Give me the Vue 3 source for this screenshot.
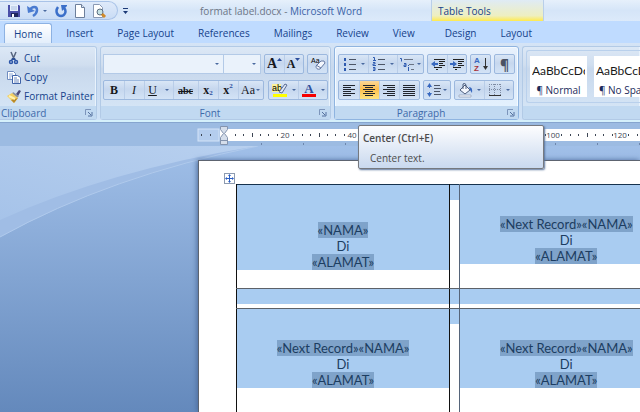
<template>
  <div class="word">
    <header class="title-bar">
      <div class="quick-access">
        <button class="qa-btn" aria-label="Save">
          <svg width="14" height="14" viewBox="0 0 14 14">
            <path d="M1 1h11l1 1v11H1z" fill="#4a4fa8" />
            <path d="M3 1h8v6H3z" fill="#e8f1fc" />
            <path d="M4 3h6M4 5h6" stroke="#a9bfe0" />
            <path d="M4 9h7v4H4z" fill="#20285f" />
            <path d="M5 10h2v3H5z" fill="#fff" />
          </svg>
        </button>
        <button class="qa-btn" aria-label="Undo">
          <svg width="14" height="14" viewBox="0 0 14 14">
            <path d="M3 6C5 2 10 2 10 6c0 3-1 4-4 6" fill="none" stroke="#4a7bd0" stroke-width="2.500" />
            <path d="M0 2l1 7 7-2z" fill="#4a7bd0" />
          </svg>
        </button>
        <span class="caret"></span>
        <button class="qa-btn" aria-label="Repeat">
          <svg width="14" height="14" viewBox="0 0 14 14">
            <path d="M3 3c-3 4-1 9 3 9s6-5 3-8" fill="none" stroke="#3b6fc9" stroke-width="2.500" />
            <path d="M6 1h6v1L7 7z" fill="#3b6fc9" />
          </svg>
        </button>
        <button class="qa-btn" aria-label="New">
          <svg width="14" height="14" viewBox="0 0 14 14">
            <path d="M.500.500h6l3 3v10h-9z" fill="#fff" stroke="#6d7f9b" />
            <path d="M6.500.500v3h3" fill="#dbe6f4" stroke="#6d7f9b" />
          </svg>
        </button>
        <button class="qa-btn" aria-label="Print Preview">
          <svg width="14" height="14" viewBox="0 0 14 14">
            <path d="M.500.500h6l3 3v10h-9z" fill="#fff" stroke="#8a99b3" />
            <circle cx="7" cy="8" r="3" fill="#c6e2e4" stroke="#5b6c80" />
            <path d="M9 10l3 3" stroke="#d08a2a" stroke-width="3" />
          </svg>
        </button>
      </div>
      <button class="customize" aria-label="Customize Quick Access Toolbar">
        <svg width="5" height="6" viewBox="0 0 5 6">
          <path d="M0 0h5v1H0zM0 3h5L2.500 6z" fill="#1c3a77" />
        </svg>
      </button>
      <h1 class="window-title"><span>format label.docx - </span>Microsoft Word</h1>
      <div class="context-title">Table Tools</div>
    </header>

    <nav class="tabs">
      <button
        v-for="tab in tabs"
        :key="tab"
        class="tab"
        :class="{ active: tab === activeTab }"
        @click="activeTab = tab"
      >{{ tab }}</button>
      <div class="context-tabs">
        <button
          v-for="tab in contextTabs"
          :key="tab"
          class="tab"
          :class="{ active: tab === activeTab }"
          @click="activeTab = tab"
        >{{ tab }}</button>
      </div>
    </nav>

    <section class="ribbon">
      <div class="group clipboard">
        <div class="group-body clip-body">
          <button class="clip-btn">
            <svg width="14" height="14" viewBox="0 0 14 14">
              <path d="M4 1l3 7M9 1L6 8" stroke="#56657f" stroke-width="1.500" />
              <path d="M5 7h3l1 2H4z" fill="#2c4f94" />
              <circle cx="4" cy="11" r="1.500" fill="none" stroke="#2c55a8" stroke-width="1.500" />
              <circle cx="9" cy="11" r="1.500" fill="none" stroke="#2c55a8" stroke-width="1.500" />
            </svg>
            Cut
          </button>
          <button class="clip-btn">
            <svg width="14" height="14" viewBox="0 0 14 14">
              <path d="M.500 1.500h6l2 2v6h-8z" fill="#fff" stroke="#6f8cc0" />
              <path d="M2 4h4M2 6h4M2 8h2" stroke="#8fa9d6" />
              <path d="M5.500 5.500h5l3 2v6h-8z" fill="#fff" stroke="#3f63a8" />
              <path d="M7 8h3M7 10h5M7 12h5" stroke="#6f8cc0" />
            </svg>
            Copy
          </button>
          <button class="clip-btn">
            <svg width="14" height="14" viewBox="0 0 14 14">
              <path d="M9 5l3-4 2 1-3 5z" fill="#4a4a78" />
              <path d="M6 3l6 4-2 2-5-4z" fill="#8a8f9e" />
              <path d="M5 4l6 5-4 5L0 7z" fill="#f3cf62" />
              <path d="M11 9l-4 5-3-3z" fill="#b98a2a" />
              <path d="M2 7l6 3" stroke="#fff3b0" stroke-width="2" />
            </svg>
            Format Painter
          </button>
        </div>
        <div class="group-label">
          <span>Clipboard</span>
          <button class="launcher" aria-label="Clipboard options"><svg width="8" height="8" viewBox="0 0 8 8"><path d="M.500 6V.500H6" class="l1" /><path d="M3 3l3 3M7 3v4H3" class="l2" /></svg></button>
        </div>
      </div>

      <div class="group font">
        <div class="group-body">
          <div class="row">
            <div class="combos">
              <div class="combo combo-name">
                <input type="text" aria-label="Font" /><span class="caret"></span>
              </div>
              <div class="combo combo-size">
                <input type="text" aria-label="Font size" /><span class="caret"></span>
              </div>
            </div>
            <div class="cluster push">
              <button class="tool slim serif grow" aria-label="Grow Font">A<svg width="5" height="3" viewBox="0 0 5 3"><path d="M0 3h5L2.500 0z" fill="#2b4d9c" /></svg></button>
              <button class="tool slim serif shrink" aria-label="Shrink Font">A<svg width="5" height="3" viewBox="0 0 5 3"><path d="M0 0h5L2.500 3z" fill="#2b4d9c" /></svg></button>
            </div>
            <div class="cluster">
              <button class="tool slim" aria-label="Clear Formatting">
                <svg width="16" height="16" viewBox="0 0 16 16">
                  <text x="1" y="7" class="tiny">Aa</text>
                  <path d="M6 10l5-5q4-1 4 2l-5 6q-4 1-4-3z" fill="#f4f7fd" stroke="#6579a3" />
                  <path d="M6 9l5 3" stroke="#6579a3" />
                </svg>
              </button>
            </div>
          </div>
          <div class="row">
            <div class="cluster">
              <button class="tool serif"><b>B</b></button>
              <button class="tool serif"><i>I</i></button>
              <button class="tool serif wide under"><u>U</u><span class="caret"></span></button>
              <button class="tool serif mid"><s>abc</s></button>
              <button class="tool serif">x<sub>2</sub></button>
              <button class="tool serif">x<sup>2</sup></button>
              <button class="tool serif mid case">Aa<span class="caret"></span></button>
            </div>
            <div class="cluster push">
              <button class="tool wide" aria-label="Text Highlight Color">
                <svg width="16" height="16" viewBox="0 0 16 16">
                  <path d="M0 2h9v8H0z" fill="#fbf39a" />
                  <text x="0" y="9" class="ab">ab</text>
                  <path d="M7 10l6-8 2 1-5 8z" fill="#dfe8f6" stroke="#5a6c94" />
                  <path d="M1 12h14v3H1z" fill="#ffff00" />
                </svg>
                <span class="caret"></span>
              </button>
              <button class="tool wide" aria-label="Font Color">
                <svg width="16" height="16" viewBox="0 0 16 16">
                  <text x="8" y="11" text-anchor="middle" class="color-a">A</text>
                  <path d="M1 12h14v3H1z" fill="#f60000" />
                </svg>
                <span class="caret"></span>
              </button>
            </div>
          </div>
        </div>
        <div class="group-label">
          <span>Font</span>
          <button class="launcher" aria-label="Font options"><svg width="8" height="8" viewBox="0 0 8 8"><path d="M.500 6V.500H6" class="l1" /><path d="M3 3l3 3M7 3v4H3" class="l2" /></svg></button>
        </div>
      </div>

      <div class="group paragraph">
        <div class="group-body">
          <div class="row">
            <div class="cluster">
              <button class="tool wide" aria-label="Bullets">
                <svg width="14" height="14" viewBox="0 0 14 14">
                  <path d="M1 1h2v3H1zM1 6h2v3H1zM1 11h2v3H1z" fill="#2f5bb0" />
                  <path d="M6 2.500h7M6 7.500h7M6 12.500h7" stroke="#4c5566" />
                </svg>
                <span class="caret"></span>
              </button>
              <button class="tool wide" aria-label="Numbering">
                <svg width="14" height="14" viewBox="0 0 14 14">
                  <path d="M1 .500h1.500v3M1 3.500h3M1 5.500h2v1.500H1v1.500h3M1 10.500h2v3H1M1 12h2" fill="none" stroke="#2f5bb0" />
                  <path d="M6 2.500h7M6 7.500h7M6 12.500h7" stroke="#4c5566" />
                </svg>
                <span class="caret"></span>
              </button>
              <button class="tool mid" aria-label="Multilevel List">
                <svg width="15" height="14" viewBox="0 0 15 14">
                  <path d="M0 1.500h1.500v3M4 6.500h2v3H4V8h2M8.500 10v4M8.500 8v1" fill="none" stroke="#2f5bb0" />
                  <path d="M4 2.500h9M9 7.500h5M11 12.500h3" stroke="#6a7384" />
                </svg>
                <span class="caret"></span>
              </button>
            </div>
            <div class="cluster">
              <button v-for="dir in ['Decrease', 'Increase']" :key="dir" class="tool slim" :aria-label="dir + ' Indent'">
                <svg width="14" height="12" viewBox="0 0 14 12">
                  <path d="M3 1.500h11M8 3.500h6M8 5.500h4M8 7.500h6M3 9.500h8M5 11.500h2" stroke="#222" />
                  <path v-if="dir === 'Decrease'" d="M0 6l4-3v2h3v2H4v2z" fill="#3768bf" />
                  <path v-else d="M7 6L3 3v2H0v2h3v2z" fill="#3768bf" />
                </svg>
              </button>
            </div>
            <div class="cluster">
              <button class="tool slim" aria-label="Sort">
                <svg width="16" height="16" viewBox="0 0 16 16">
                  <text x="1" y="7" class="sort-a">A</text>
                  <text x="1" y="15" class="sort-z">Z</text>
                  <path d="M12.500 2v11" stroke="#333" />
                  <path d="M10 10h5l-2.500 4z" fill="#333" />
                </svg>
              </button>
            </div>
            <div class="cluster">
              <button class="tool slim pilcrow" aria-label="Show paragraph marks">¶</button>
            </div>
          </div>
          <div class="row">
            <div class="cluster">
              <button
                v-for="a in alignments"
                :key="a.name"
                class="tool"
                :class="{ on: a.name === align }"
                :aria-label="a.name"
                @click="align = a.name"
              >
                <svg width="14" height="11" viewBox="0 0 14 11"><path :d="a.path" stroke="#20242c" /></svg>
              </button>
            </div>
            <div class="cluster">
              <button class="tool mid" aria-label="Line spacing">
                <svg width="14" height="14" viewBox="0 0 14 14">
                  <path d="M2.500 2v3M2.500 9v3" stroke="#3768bf" />
                  <path d="M0 4h5L2.500 0zM0 10h5L2.500 14z" fill="#3768bf" />
                  <path d="M7 2.500h6M7 5.500h7M7 8.500h6M7 11.500h7" stroke="#4c5566" />
                </svg>
                <span class="caret"></span>
              </button>
            </div>
            <div class="cluster">
              <button class="tool wide" aria-label="Shading">
                <svg width="15" height="15" viewBox="0 0 15 15">
                  <path d="M2 7l5-5 5 5-5 4z" fill="#f4f7fd" stroke="#4f5f7d" />
                  <path d="M5 6V1q2-2 3 1v4" fill="none" stroke="#4f5f7d" />
                  <path d="M11 4q4 0 3 6l-2-3z" fill="#3768bf" />
                  <path d="M1 12h12v2H1z" fill="#fff" stroke="#a4b1c8" />
                </svg>
                <span class="caret"></span>
              </button>
              <button class="tool wide" aria-label="Borders">
                <svg width="14" height="14" viewBox="0 0 14 14">
                  <path d="M1.500 1v11M6.500 1v11M12.500 1v11M1 1.500h12M1 6.500h12" stroke="#7e8ba3" stroke-dasharray="1 1" />
                  <path d="M1 12.500h12" stroke="#333" />
                </svg>
                <span class="caret"></span>
              </button>
            </div>
          </div>
        </div>
        <div class="group-label">
          <span>Paragraph</span>
          <button class="launcher" aria-label="Paragraph options"><svg width="8" height="8" viewBox="0 0 8 8"><path d="M.500 6V.500H6" class="l1" /><path d="M3 3l3 3M7 3v4H3" class="l2" /></svg></button>
        </div>
      </div>

      <div class="group styles">
        <div class="gallery">
          <button v-for="s in styles" :key="s" class="style-card">
            <span class="sample">AaBbCcDc</span>
            <span class="style-name">¶ {{ s }}</span>
          </button>
        </div>
        <div class="group-label"></div>
      </div>
    </section>

    <main class="workspace">
      <svg class="ruler" height="23">
        <rect x="198" y="6" width="21" height="12" fill="#b4cdee" stroke="#d3e3f7" />
        <rect x="220" y="6" width="100%" height="12" fill="#fff" />
        <rect
          v-for="m in marks"
          :key="'m' + m.x"
          :x="m.x"
          :y="m.tall ? 10 : 11"
          width="1"
          :height="m.tall ? 4 : 2"
          fill="#3d4654"
        />
        <text v-for="n in numbers" :key="n" :x="218 + n * 67 / 20" y="15" class="ruler-num">{{ n }}</text>
        <rect v-for="n in 10" :key="'s' + n" :x="219 + n * 42" y="20" width="1" height="2" fill="#6d86ad" />
        <path d="M220.500 3.500h7v3l-3 4 3 4v7h-7v-7l3-4-3-4z" fill="#d5deeb" stroke="#8494ae" />
        <path d="M220 17.500h8" stroke="#8494ae" />
      </svg>

      <div class="desk">
        <svg class="swoosh" width="260" height="92" viewBox="0 0 260 92">
          <path d="M0 0h258Q120 26 0 91z" fill="#a0bde5" />
          <path d="M0 91Q110 30 258 0" fill="none" stroke="#b0caec" />
          <path d="M0 0h258Q110 24 0 74z" fill="url(#glow)" />
          <defs>
            <linearGradient id="glow" x1="0" y1="1" x2="1" y2="0">
              <stop offset="0" stop-color="#a6c3e9" />
              <stop offset="1" stop-color="#b8d0ef" />
            </linearGradient>
          </defs>
        </svg>

        <article class="page">
          <svg class="move-handle" width="11" height="11" viewBox="0 0 11 11">
            <rect x=".500" y=".500" width="10" height="10" fill="#fff" stroke="#8d9bb0" />
            <path d="M5.500 2v7M2 5.500h7" stroke="#2c5fc4" />
            <path d="M4 3h3L5.500 1zM4 8h3L5.500 10zM3 4v3L1 5.500zM8 4v3l2-1.500z" fill="#2c5fc4" />
          </svg>
          <table class="labels">
            <colgroup>
              <col class="label-col" /><col class="gap-col" /><col class="label-col" />
            </colgroup>
            <tbody>
              <tr class="label-row">
                <td><div class="selected first">
                  <p><span class="merge">«NAMA»</span></p>
                  <p>Di</p>
                  <p><span class="merge">«ALAMAT»</span></p>
                </div></td>
                <td><div class="selected blank"></div></td>
                <td><div class="selected">
                  <p><span class="merge">«Next Record»«NAMA»</span></p>
                  <p>Di</p>
                  <p><span class="merge">«ALAMAT»</span></p>
                </div></td>
              </tr>
              <tr class="spacer-row">
                <td v-for="n in 3" :key="n"><div class="selected blank"></div></td>
              </tr>
              <tr class="label-row">
                <td><div class="selected">
                  <p><span class="merge">«Next Record»«NAMA»</span></p>
                  <p>Di</p>
                  <p><span class="merge">«ALAMAT»</span></p>
                </div></td>
                <td><div class="selected blank"></div></td>
                <td><div class="selected">
                  <p><span class="merge">«Next Record»«NAMA»</span></p>
                  <p>Di</p>
                  <p><span class="merge">«ALAMAT»</span></p>
                </div></td>
              </tr>
            </tbody>
          </table>
        </article>
      </div>

      <div class="tooltip" role="tooltip">
        <strong>Center (Ctrl+E)</strong>
        <p>Center text.</p>
      </div>
    </main>
  </div>
</template>

<script setup>
import { ref } from 'vue'

const tabs = ['Home', 'Insert', 'Page Layout', 'References', 'Mailings', 'Review', 'View']
const contextTabs = ['Design', 'Layout']
const activeTab = ref('Home')

const align = ref('Center')
const alignments = [
  { name: 'Align Left', path: 'M1 .5h12M1 2.500h8M1 4.500h12M1 6.500h8M1 8.500h12M1 10.500h8' },
  { name: 'Center', path: 'M1 .5h12M3 2.500h8M1 4.500h12M3 6.500h8M1 8.500h12M3 10.500h8' },
  { name: 'Align Right', path: 'M1 .5h12M5 2.500h8M1 4.500h12M5 6.500h8M1 8.500h12M5 10.500h8' },
  { name: 'Justify', path: 'M1 .5h12M1 2.500h12M1 4.500h12M1 6.500h12M1 8.500h12M1 10.500h12' },
]

const styles = ['Normal', 'No Spac']

// ruler: 67px for every 20mm, eight steps per number
// 60 and 80 sit under the tooltip
const numbers = [20, 40, 100, 120]
const marks = []
for (let i = -2; i < 56; i++) {
  if (i === 0 || i === 1 || (i > 0 && i % 8 === 0)) continue
  marks.push({ x: Math.round(218 + (i * 67) / 8), tall: i > 0 && i % 8 === 4 })
}
</script>

<style>
body {
  background: #6a90c4;
  overflow: hidden;
}
</style>

<style scoped>
.word {
  height: 100vh;
  display: flex;
  flex-direction: column;
  overflow: hidden;
  font-family: "Open Sans", "Noto Sans", sans-serif;
  font-size: 10px;
  color: #15428b;
}

button {
  border: 0;
  padding: 0;
  margin: 0;
  background: none;
  font: inherit;
  color: inherit;
  white-space: nowrap;
}

svg { display: block; flex: none; }

p, h1 { margin: 0; }

.title-bar {
  position: relative;
  flex: none;
  height: 21px;
  display: flex;
  align-items: center;
  background: linear-gradient(#e6f0fb, #d5e5f8 50%, #dceafa);
}

.quick-access {
  box-sizing: border-box;
  width: 118px;
  height: 19px;
  display: flex;
  align-items: center;
  gap: 6px;
  padding-left: 7px;
  background: linear-gradient(#dfeafa, #c9dcf5);
  border: 1px solid #a9c3e8;
  border-left: 0;
  border-radius: 0 10px 10px 0;
}

.caret {
  flex: none;
  border: 2px solid transparent;
  border-top-color: #49699f;
  border-bottom: 0;
}

.qa-btn + .caret { margin: 0 2px 0 -4px; }

.qa-btn:last-child { margin-left: -2px; }

.customize { margin-left: 5px; }

.window-title {
  margin-left: 72px;
  font-size: 10px;
  font-weight: 400;
  color: #3a62a6;
}

.window-title span {
  color: #6d7686;
  white-space: pre;
}

.context-title {
  position: absolute;
  left: 431px;
  top: 0;
  box-sizing: border-box;
  width: 113px;
  height: 21px;
  padding-left: 6px;
  line-height: 23px;
  background: linear-gradient(#dfebf5, #eeefc0 75%, #ffea4e);
  border-left: 1px solid #b9cfe9;
  border-right: 1px solid #b9cfe9;
}

.tabs {
  flex: none;
  height: 22px;
  display: flex;
  align-items: flex-end;
  padding-left: 4px;
  background: #bfdbff;
}

.tab {
  height: 20px;
  padding: 0 12px;
}

.tab.active {
  margin-right: 2px;
  padding: 0 9px;
  background: linear-gradient(#fff, #e3eefb);
  border: 1px solid #8db2e3;
  border-bottom: 0;
  border-radius: 3px 3px 0 0;
}

.context-tabs {
  display: flex;
  margin-left: 6px;
}

.ribbon {
  flex: none;
  display: flex;
  gap: 3px;
  padding: 3px 0 2px;
  background: linear-gradient(#d5e4f6, #c8d9ee 30%, #cfe2f7);
  border-bottom: 1px solid #86a5cf;
  box-shadow: inset 0 -2px #d5f0fb;
}

.group {
  flex: none;
  box-sizing: border-box;
  display: flex;
  flex-direction: column;
  background: linear-gradient(#dce8f6, #d0deef 25%, #c8d8ec 30%, #d8e8f8);
  border: 1px solid #b2cae6;
  border-radius: 3px;
  box-shadow: inset -1px 0 #e8f2fc;
}

.group-body {
  display: flex;
  flex-direction: column;
  gap: 6px;
  padding: 7px 2px 6px;
}

.group-label {
  height: 13px;
  display: flex;
  align-items: center;
  background: #c1d9f1;
  color: #3e6aaa;
}

.group-label span {
  flex: 1;
  text-align: center;
}

.launcher { margin-right: 3px; }
.launcher .l1 { fill: none; stroke: #7d95bb; }
.launcher .l2 { fill: none; stroke: #55719f; }

.clipboard {
  width: 97px;
  border-left: 0;
  border-radius: 0 3px 3px 0;
}

.clip-body {
  gap: 0;
  padding: 1px 0 0 7px;
  height: 58px;
}

.clip-btn {
  height: 19px;
  display: flex;
  align-items: center;
  gap: 3px;
}

.clipboard .group-label { padding-left: 1px; }
.clipboard .group-label span { text-align: left; }

.font { width: 231px; }

.row {
  display: flex;
  gap: 3px;
}

.cluster {
  box-sizing: border-box;
  height: 20px;
  display: flex;
  background: linear-gradient(#d9e6f6, #c6d7ee 45%, #d3e3f6);
  border: 1px solid #9cb8de;
  border-radius: 2px;
}

.push { margin-left: auto; }

.tool {
  width: 20px;
  display: flex;
  align-items: center;
  justify-content: center;
  color: #16181d;
}

.tool + .tool {
  box-shadow: inset 1px 0 #b9cde8;
}

.slim { width: 19px; }
.wide { width: 29px; gap: 4px; }
.under { gap: 8px; }
.mid { width: 25px; }
.paragraph .mid { width: 26px; gap: 2px; }

.serif {
  font-family: "Liberation Serif", serif;
  font-size: 12px;
  font-weight: 700;
}

.serif i, .serif u { font-weight: 400; }
.serif s { font-size: 10px; }
.serif sub, .serif sup { font-size: 7px; color: #2b4d9c; line-height: 7px; }
.serif sub { align-self: flex-end; padding-bottom: 2px; }
.serif sup { align-self: flex-start; padding-top: 2px; }
.case { font-weight: 400; gap: 1px; }
.grow { font-size: 14px; }
.grow svg, .shrink svg { align-self: flex-start; margin-top: 3px; }

.tiny { font: 7px "Liberation Sans", sans-serif; }
.ab { font: 9px "Liberation Sans", sans-serif; }
.color-a { font: 700 13px "Liberation Serif", serif; fill: #2f4f9c; }
.sort-a { font: 700 8px "Liberation Sans", sans-serif; fill: #3768bf; }
.sort-z { font: 700 8px "Liberation Sans", sans-serif; fill: #a8323a; }
.pilcrow { font-size: 14px; font-weight: 700; color: #4a5364; }

.tool.on {
  background: linear-gradient(#fbd79a, #fdbf4e 45%, #ffe480);
}

.combos { display: flex; }

.combo {
  box-sizing: border-box;
  height: 20px;
  display: flex;
  align-items: center;
  padding-right: 4px;
  background: #eaf2fb;
  border: 1px solid #b3cae7;
}

.combo input {
  flex: 1;
  min-width: 0;
  padding: 0;
  border: 0;
  outline: 0;
  background: none;
  font: inherit;
}

.combo-name { width: 121px; }
.combo-size { width: 37px; border-left: 0; }

.paragraph {
  width: 185px;
  background: linear-gradient(#e9f2fd, #dce9f9 30%, #e6f3ff);
  border-color: #8fb4e0;
  box-shadow: inset 0 0 0 1px #f4faff;
}

.paragraph .group-body { padding-left: 3px; }

.styles {
  flex: 1;
  min-width: 0;
  border-right: 0;
  border-radius: 3px 0 0 3px;
  overflow: hidden;
}

.gallery {
  flex: 1;
  display: flex;
  gap: 7px;
  margin: 3px 0 3px 3px;
  padding: 5px 0 5px 3px;
  overflow: hidden;
  border: 1px solid #b9d0ec;
  border-right: 0;
  border-radius: 3px 0 0 3px;
}

.style-card {
  flex: none;
  width: 57px;
  display: flex;
  flex-direction: column;
  align-items: center;
  justify-content: space-between;
  padding: 7px 2px 0;
  background: #fff;
  overflow: hidden;
}

.sample {
  width: 100%;
  overflow: hidden;
  text-align: left;
  font-family: Lato, sans-serif;
  font-size: 12px;
  line-height: 16px;
  color: #1b1b1b;
}

.style-name { color: #1c2b5c; }

.workspace {
  position: relative;
  flex: 1;
  min-height: 0;
  display: flex;
  flex-direction: column;
  background: #9cbbe2;
}

.ruler { width: 100%; }

.ruler-num {
  font-size: 8px;
  fill: #3d4654;
  text-anchor: middle;
}

.desk {
  position: relative;
  flex: 1;
  min-height: 0;
  display: flex;
  padding: 14px 0 0 198px;
  overflow: hidden;
  background: linear-gradient(#a0bfe8, #6489bc);
}

.swoosh {
  position: absolute;
  left: 0;
  top: 0;
}

.page {
  position: relative;
  flex: 1;
  min-width: 0;
  padding: 23px 0 0 37px;
  background: #fff;
  border-top: 1px solid #5d6470;
  border-left: 1px solid #5d6470;
  box-shadow: -1px 0 5px #4b6a9a;
}

.move-handle {
  position: absolute;
  left: 25px;
  top: 12px;
}

.labels {
  width: 436px;
  table-layout: fixed;
  border-collapse: collapse;
  border-top: 1px solid #16324e;
  font-family: Lato, sans-serif;
  font-size: 13px;
  line-height: 16px;
  color: #1c3d61;
  text-align: center;
}

.label-col { width: 213px; }
.gap-col { width: 10px; }

.labels td {
  padding: 0;
  vertical-align: top;
  border-left: 1px solid #111;
  border-bottom: 1px solid #5c6168;
}

.labels td:nth-child(3) { border-left-color: #56657a; }
.label-row { height: 104px; }
.spacer-row { height: 20px; }

.selected {
  padding-top: 31px;
  background: #a9ccf1;
}

.selected.first { padding-top: 37px; }

.selected.blank {
  height: 15px;
  padding-top: 0;
}

.merge {
  display: inline-block;
  background: #7fa3ca;
}

.tooltip {
  position: absolute;
  left: 358px;
  top: 2px;
  box-sizing: border-box;
  width: 186px;
  height: 44px;
  padding: 4px 4px;
  background: linear-gradient(#fdfdfe, #c9d9ef);
  border: 1px solid #76797f;
  border-radius: 2px;
  box-shadow: 1px 1px 2px #5b759c;
  line-height: 16px;
  color: #4c4c4c;
}

.tooltip strong { font-weight: 600; }
.tooltip p { padding: 4px 0 0 7px; }
</style>
